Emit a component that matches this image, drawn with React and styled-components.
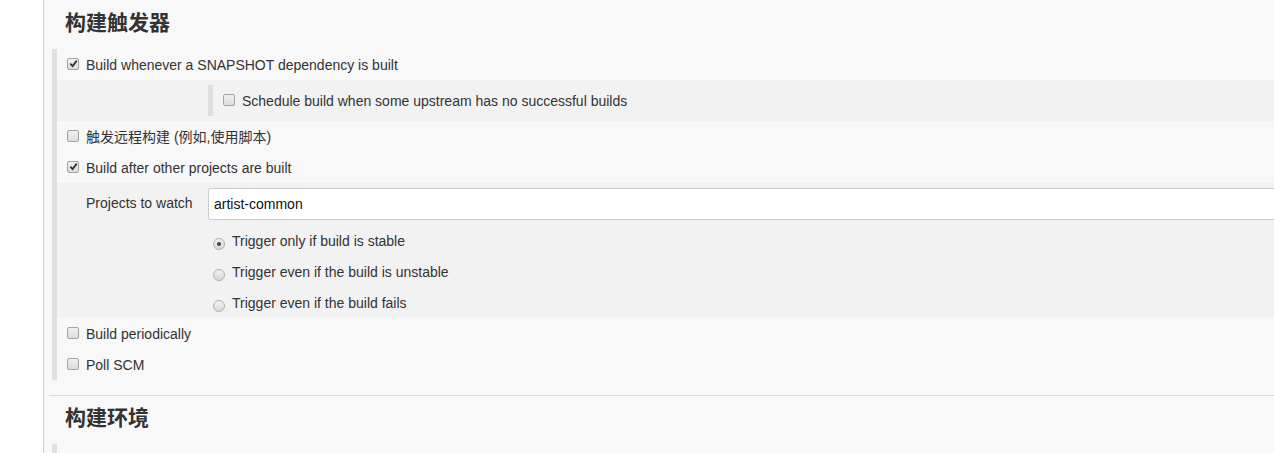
import styled, { createGlobalStyle } from "styled-components";

const GlobalStyle = createGlobalStyle`
  html, body {
    margin: 0;
    padding: 0;
    background: #fff;
    overflow: hidden;
  }
  body {
    font-family: "Liberation Sans", Arial, "Noto Sans CJK SC", sans-serif;
    font-size: 14px;
    color: #333;
  }
`;

const Page = styled.div`
  display: flex;
  height: 453px;
  overflow: hidden;
`;

const SidePanel = styled.div`
  width: 43px;
  flex: none;
  background: #fff;
  border-right: 1px solid #d0d0d0;
`;

const Main = styled.div`
  flex: 1;
  min-width: 0;
  background: #f8f8f8;
  padding-left: 5px;
  overflow: hidden;
`;

const SectionHeader = styled.div`
  border-top: 1px solid ${(p) => (p.$first ? "transparent" : "#dcdcdc")};
  height: 48px;
  margin-top: ${(p) => (p.$first ? "0" : "15px")};
  padding-left: 16px;
  > h3 {
    margin: 0;
    height: 39px;
    line-height: 40px;
    font-family: "Noto Sans CJK SC", "Liberation Sans", sans-serif;
    font-size: 21px;
    font-weight: 700;
    color: #333;
  }
`;

const Block = styled.div`
  margin-left: 3px;
  border-left: 5px solid #e0e0e0;
  display: flex;
  flex-direction: column;
`;

const Row = styled.label`
  display: flex;
  align-items: center;
  height: 31px;
  padding-left: ${(p) => p.$indent ?? 10}px;
  white-space: nowrap;
  > .text {
    line-height: 16px;
    margin-top: 1px;
  }
`;

const Nested = styled.div`
  background: #f2f2f2;
  display: flex;
  flex-direction: column;
`;

const SubBlock = styled.div`
  margin: 5px 0 5px 151px;
  border-left: 5px solid #dedede;
  display: flex;
  flex-direction: column;
`;

const Box = styled.span`
  width: 10px;
  height: 10px;
  flex: none;
  margin-right: 7px;
  margin-top: -2px;
  border: 1px solid #a3a3a3;
  border-radius: 2px;
  background: linear-gradient(#f0f0f0, #dcdcdc);
  display: flex;
  align-items: center;
  justify-content: center;
  > svg {
    width: 9px;
    height: 9px;
  }
`;

const Radio = styled.span`
  width: 10px;
  height: 10px;
  flex: none;
  margin: 7px 7px 0 0;
  border: 1px solid #b0b0b0;
  border-radius: 50%;
  background: linear-gradient(#f2f2f2, #d8d8d8);
  display: flex;
  align-items: center;
  justify-content: center;
  &::after {
    content: "";
    display: ${(p) => (p.$checked ? "block" : "none")};
    width: 4px;
    height: 4px;
    border-radius: 50%;
    background: #444;
  }
`;

const FieldRow = styled.div`
  display: flex;
  align-items: center;
  height: 42px;
  padding-left: 29px;
  > .label {
    width: 122px;
    flex: none;
    margin-top: -2px;
  }
`;

const TextInput = styled.input`
  flex: 1;
  margin-right: -12px;
  height: 32px;
  box-sizing: border-box;
  border: 1px solid #cccccc;
  border-radius: 3px;
  background: #fff;
  padding: 0 5px;
  font-family: "Liberation Sans", Arial, sans-serif;
  font-size: 14px;
  color: #111;
  outline: none;
`;

const RadioGroup = styled.div`
  display: flex;
  flex-direction: column;
  padding-left: 156px;
`;

const Check = () => (
  <svg viewBox="0 0 10 10">
    <path d="M1.5 5.2 L4 7.8 L8.6 1.8" fill="none" stroke="#333" strokeWidth="2" />
  </svg>
);

const CheckRow = ({ checked, text, indent }) => (
  <Row $indent={indent}>
    <Box>{checked && <Check />}</Box>
    <span className="text">{text}</span>
  </Row>
);

const RadioRow = ({ checked, text }) => (
  <Row $indent={0}>
    <Radio $checked={checked} />
    <span className="text">{text}</span>
  </Row>
);

export default function App() {
  return (
    <>
      <GlobalStyle />
      <Page>
        <SidePanel />
        <Main>
          <SectionHeader $first>
            <h3>构建触发器</h3>
          </SectionHeader>
          <Block>
            <CheckRow checked text="Build whenever a SNAPSHOT dependency is built" />
            <Nested>
              <SubBlock>
                <CheckRow text="Schedule build when some upstream has no successful builds" />
              </SubBlock>
            </Nested>
            <CheckRow text="触发远程构建 (例如,使用脚本)" />
            <CheckRow checked text="Build after other projects are built" />
            <Nested>
              <FieldRow>
                <span className="label">Projects to watch</span>
                <TextInput defaultValue="artist-common" />
              </FieldRow>
              <RadioGroup>
                <RadioRow checked text="Trigger only if build is stable" />
                <RadioRow text="Trigger even if the build is unstable" />
                <RadioRow text="Trigger even if the build fails" />
              </RadioGroup>
            </Nested>
            <CheckRow text="Build periodically" />
            <CheckRow text="Poll SCM" />
          </Block>
          <SectionHeader>
            <h3>构建环境</h3>
          </SectionHeader>
          <Block style={{ height: 20 }} />
        </Main>
      </Page>
    </>
  );
}
